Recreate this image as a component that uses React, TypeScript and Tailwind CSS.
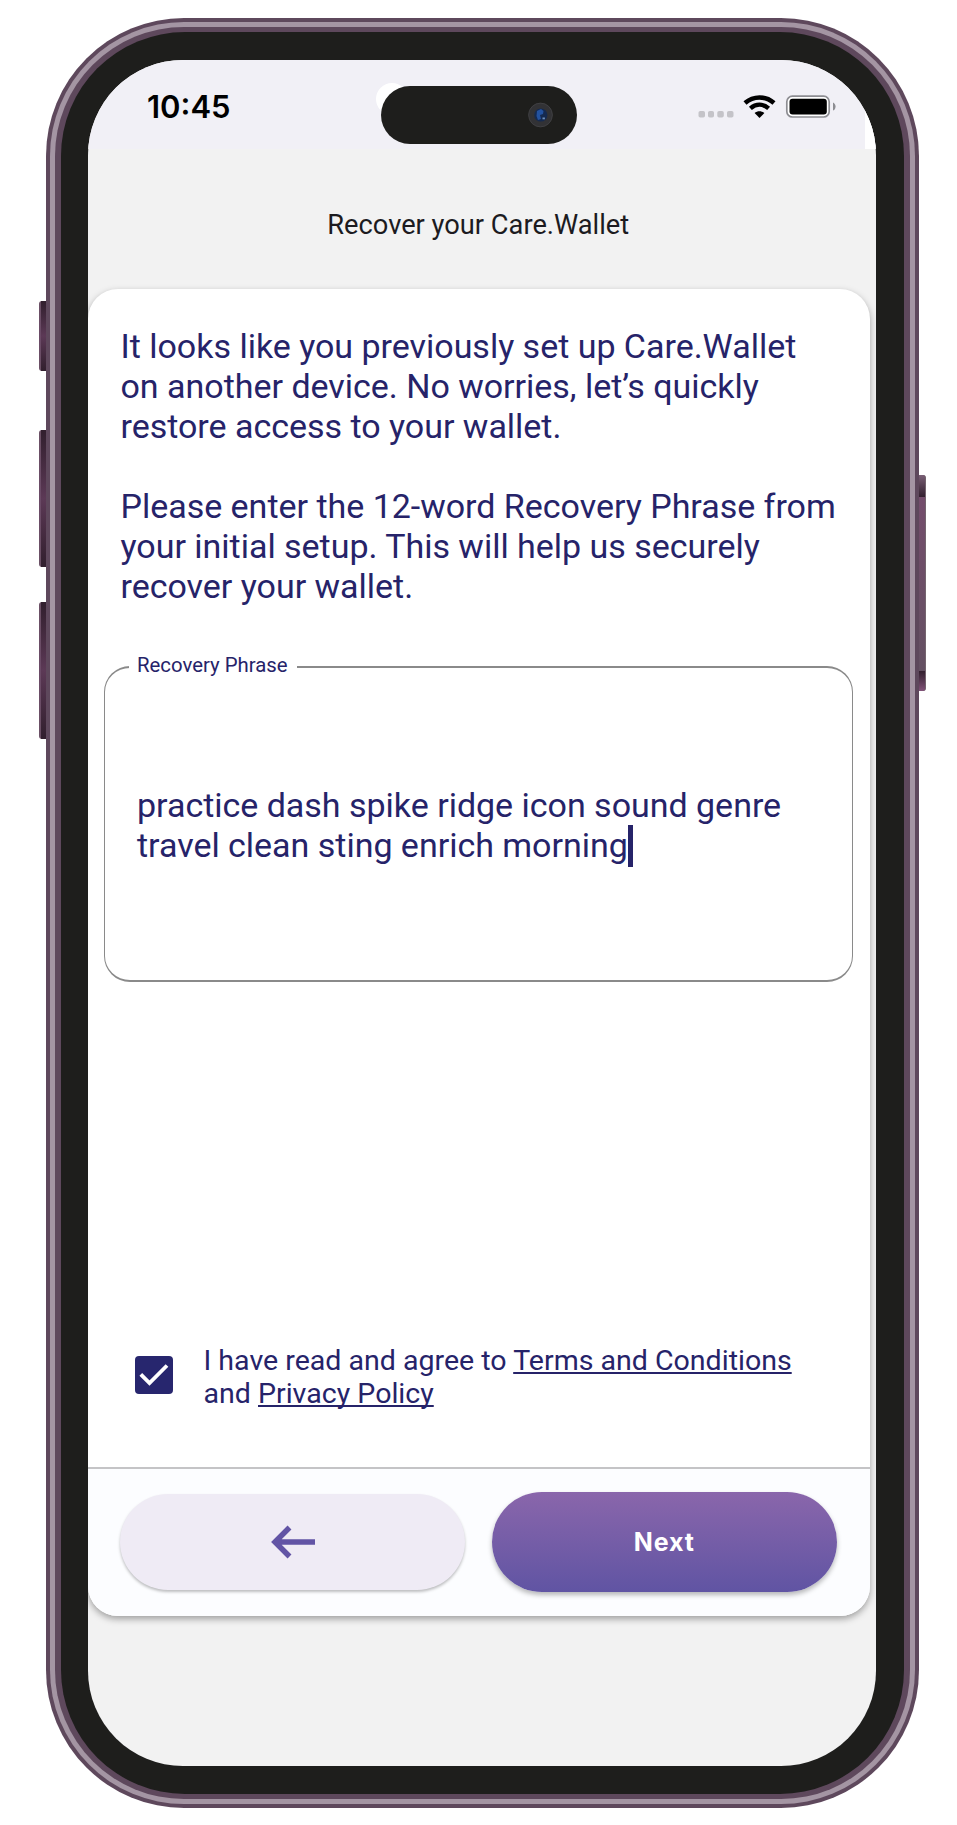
import React from "react";

function StatusIcons() {
  return (
    <svg width="138" height="26" viewBox="0 0 138 26" className="block">
      <g fill="#c4c3c8">
        <rect x="0.5" y="17" width="6.5" height="6.5" rx="1.8" />
        <rect x="10" y="17" width="6" height="6.5" rx="1.8" />
        <rect x="19.3" y="17" width="6.5" height="6.5" rx="1.8" />
        <rect x="29" y="17" width="6.5" height="6.5" rx="1.8" />
      </g>
      <g fill="none" stroke="#000">
        <path d="M47 9 C55.5 1.6 67.5 1.6 76 9" strokeWidth="4.6" />
        <path d="M52.4 14.4 C58 9.6 65 9.6 70.6 14.4" strokeWidth="4.4" />
      </g>
      <path d="M61.5 24 L56.6 19.1 C59.4 16.6 63.6 16.6 66.4 19.1 Z" fill="#000" />
      <rect x="88.8" y="2.2" width="42.4" height="20.8" rx="5.6" fill="#fff" stroke="#8d8d92" strokeWidth="1.7" />
      <rect x="91.5" y="4.8" width="37.3" height="15.6" rx="3" fill="#000" />
      <path d="M135 8.4 C138.4 9.8 138.4 15.2 135 16.6 Z" fill="#8d8d92" />
    </svg>
  );
}

function SideButton({ className }: { className: string }) {
  return (
    <div
      className={`absolute w-[9px] rounded-[3px] bg-linear-to-b from-[#6b5065] via-[#6a4a66] to-[#6b5065] ${className}`}
    >
      <div className="mx-auto h-full w-[5px] bg-linear-to-b from-[#33202f] from-2% via-[#5c3956] to-[#33202f] to-98%" />
    </div>
  );
}

function RightButton() {
  return (
    <div className="absolute left-[917px] top-[475px] flex h-[216px] w-[9px] flex-col overflow-hidden rounded-[3px] border-r border-[#75656f] bg-[#6b5065]">
      <div className="h-[22px] bg-linear-to-b from-[#7b6076] to-[#33202f]" />
      <div className="flex-1 bg-linear-to-b from-[#744d6c] to-[#645062]" />
      <div className="h-[20px] bg-linear-to-b from-[#33202f] to-[#83547a]" />
    </div>
  );
}

function StatusBar() {
  return (
    <div className="relative flex h-[89px] shrink-0 bg-[#f1f0f6]">
      <div className="absolute right-0 top-0 h-full w-[11px] bg-white" />
      <div className="absolute left-[288px] top-[23px] h-8 w-8 rounded-full bg-white" />
      <div className="relative flex h-full w-full justify-between pl-[59px] pr-[40.5px]">
        <div className="mt-[29px] font-['Inter',sans-serif] text-[31px] leading-[36px] font-semibold text-black">
          10:45
        </div>
        <div className="mt-[34px]">
          <StatusIcons />
        </div>
      </div>
      <div className="absolute left-[292.5px] top-[26px] flex h-[57.5px] w-[196.5px] items-center justify-end rounded-full bg-[#1e1e1c] pr-[24px]">
        <svg width="25" height="26" viewBox="0 0 25 26">
          <circle cx="12.5" cy="13" r="11.9" fill="#323235" stroke="#454548" strokeWidth="0.8" />
          <circle cx="12.8" cy="13" r="6.6" fill="#152a50" />
          <path d="M9 9 L13 7 L15.5 9 L15 12 L12 13 L13 17 L10 18 L8.5 14 Z" fill="#2352a0" />
          <rect x="14.5" y="15.5" width="2.4" height="1.8" fill="#6f90bb" />
        </svg>
      </div>
    </div>
  );
}

export default function App() {
  return (
    <div className="relative h-[1825px] w-[957px] overflow-hidden bg-white pl-[46px] pt-[18px] font-['Roboto',sans-serif] text-[#262369]">
      <SideButton className="left-[39px] top-[301px] h-[70px]" />
      <SideButton className="left-[39px] top-[430px] h-[137px]" />
      <SideButton className="left-[39px] top-[602px] h-[137px]" />
      <RightButton />

      <div className="relative h-[1790px] w-[872.5px] rounded-[138px] bg-[#5e485c] p-1">
        <div className="h-full rounded-[134px] bg-[#a495a3] p-[5px]">
          <div className="h-full rounded-[129px] bg-[#5e485c] px-[6px] py-[5px]">
            <div className="h-full rounded-[124px] bg-[#1e1e1c] px-[27px] pt-[28px] pb-[29px]">
              <main className="flex h-[1705.5px] w-[788px] flex-col overflow-hidden rounded-[95px] bg-[#f2f2f2]">
                <StatusBar />
                <header className="flex h-[139.5px] shrink-0 items-center justify-center pr-[7.5px] pt-[12px] text-[27.25px] leading-[32px] text-[#1c1b1f]">
                  Recover your Care.Wallet
                </header>

                <section className="flex h-[1327.5px] w-[781.5px] shrink-0 flex-col overflow-hidden rounded-[30px] bg-white shadow-[0_3px_7px_rgba(0,0,0,0.35)]">
                  <div className="flex flex-1 flex-col">
                    <div className="flex flex-col gap-[40px] pl-[32.5px] pt-[37.5px] text-[34px] leading-[40px] tracking-[-0.02px] whitespace-nowrap">
                      <p>
                        It looks like you previously set up Care.Wallet
                        <br />
                        on another device. No worries, let’s quickly
                        <br />
                        restore access to your wallet.
                      </p>
                      <p>
                        Please enter the 12-word Recovery Phrase from
                        <br />
                        your initial setup. This will help us securely
                        <br />
                        recover your wallet.
                      </p>
                    </div>

                    <fieldset className="relative ml-[16px] mt-[60px] h-[316px] w-[749px] rounded-[26px] border border-y-2 border-[#8a8a8a] pl-[32px] pt-[117px]">
                      <div className="absolute -top-[15px] left-[24px] bg-white pl-[8px] pr-[9px] text-[20.35px] leading-[24px] whitespace-nowrap">
                        Recovery Phrase
                      </div>
                      <div className="text-[34px] leading-[40px] tracking-[-0.02px] whitespace-nowrap">
                        practice dash spike ridge icon sound genre
                        <br />
                        <span className="flex">
                          travel clean sting enrich morning
                          <span className="h-[42px] w-[5px] bg-[#262369]" />
                        </span>
                      </div>
                    </fieldset>

                    <div className="mt-auto flex items-start pb-[56px] pl-[47px]">
                      <div className="mt-[12.5px] flex h-[38px] w-[38px] items-center justify-center rounded-[4px] bg-[#27266e]">
                        <svg width="38" height="38" viewBox="0 0 38 38">
                          <path d="M5.8 18.3 L14.5 27 L32 9.5" fill="none" stroke="#fff" strokeWidth="3.8" />
                        </svg>
                      </div>
                      <p className="ml-[30.5px] text-[28.55px] leading-[33.4px] whitespace-nowrap">
                        I have read and agree to{" "}
                        <span className="underline decoration-[1.5px] underline-offset-[2px] [text-decoration-skip-ink:none]">
                          Terms and Conditions
                        </span>
                        <br />
                        and{" "}
                        <span className="underline decoration-[1.5px] underline-offset-[2px] [text-decoration-skip-ink:none]">
                          Privacy Policy
                        </span>
                      </p>
                    </div>
                  </div>

                  <footer className="flex h-[149.5px] shrink-0 items-start border-t-2 border-[#c4c4c6] bg-[#fcfdff] pl-[32px] pt-[23.5px]">
                    <button className="mt-[1.5px] flex h-[96px] w-[345px] items-center justify-center rounded-full bg-[#efebf5] shadow-[0_2px_3px_rgba(0,0,0,0.25)]">
                      <svg width="46" height="34" viewBox="0 0 46 34">
                        <path
                          d="M19.5 2.5 L5 17 L19.5 31.5 M5 17 H45"
                          fill="none"
                          stroke="#6254a5"
                          strokeWidth="5.5"
                        />
                      </svg>
                    </button>
                    <button className="ml-[27px] flex h-[100px] w-[344.5px] items-center justify-center rounded-full bg-linear-to-b from-[#8a66ab] to-[#6054a3] pt-[2px] font-['Inter',sans-serif] text-[25px] font-bold tracking-[0.9px] text-white shadow-[0_3px_5px_rgba(0,0,0,0.28)]">
                      Next
                    </button>
                  </footer>
                </section>
              </main>
            </div>
          </div>
        </div>
      </div>
    </div>
  );
}
